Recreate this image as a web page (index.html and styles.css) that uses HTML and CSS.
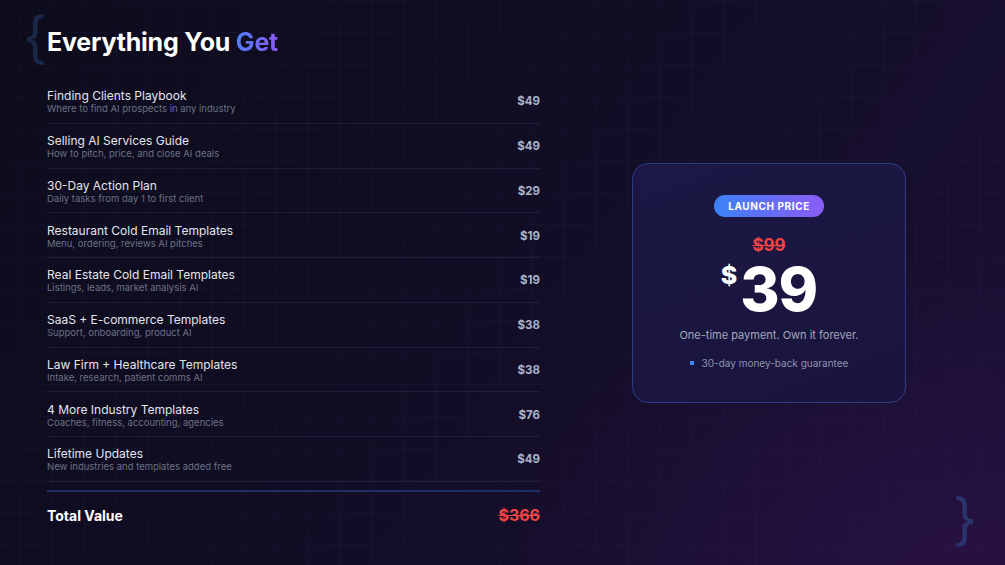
FILE: index.html
```html
<!DOCTYPE html>
<html>
<head>
<meta charset="utf-8">
<link rel="stylesheet" href="styles.css">
</head>
<body>
<div class="page">
  <span class="brace brace-open">{</span>
  <span class="brace brace-close">}</span>
  <section class="left">
    <h1 class="title">Everything You <span class="accent">Get</span></h1>
    <ul class="items">
      <li class="item"><div class="txt"><div class="name">Finding Clients Playbook</div><div class="desc">Where to find AI prospects in any industry</div></div><div class="price">$49</div></li>
      <li class="item"><div class="txt"><div class="name">Selling AI Services Guide</div><div class="desc">How to pitch, price, and close AI deals</div></div><div class="price">$49</div></li>
      <li class="item"><div class="txt"><div class="name">30-Day Action Plan</div><div class="desc">Daily tasks from day 1 to first client</div></div><div class="price">$29</div></li>
      <li class="item"><div class="txt"><div class="name">Restaurant Cold Email Templates</div><div class="desc">Menu, ordering, reviews AI pitches</div></div><div class="price">$19</div></li>
      <li class="item"><div class="txt"><div class="name">Real Estate Cold Email Templates</div><div class="desc">Listings, leads, market analysis AI</div></div><div class="price">$19</div></li>
      <li class="item"><div class="txt"><div class="name">SaaS + E-commerce Templates</div><div class="desc">Support, onboarding, product AI</div></div><div class="price">$38</div></li>
      <li class="item"><div class="txt"><div class="name">Law Firm + Healthcare Templates</div><div class="desc">Intake, research, patient comms AI</div></div><div class="price">$38</div></li>
      <li class="item"><div class="txt"><div class="name">4 More Industry Templates</div><div class="desc">Coaches, fitness, accounting, agencies</div></div><div class="price">$76</div></li>
      <li class="item"><div class="txt"><div class="name">Lifetime Updates</div><div class="desc">New industries and templates added free</div></div><div class="price">$49</div></li>
    </ul>
    <div class="total">
      <span class="total-label">Total Value</span>
      <span class="total-price">$366</span>
    </div>
  </section>
  <section class="right">
    <div class="card">
      <span class="badge">LAUNCH PRICE</span>
      <div class="old">$99</div>
      <div class="now"><span class="cur">$</span><span class="amt">39</span></div>
      <p class="note">One-time payment. Own it forever.</p>
      <p class="guarantee"><span class="dot"></span>30-day money-back guarantee</p>
    </div>
  </section>
</div>
</body>
</html>
```
FILE: styles.css
```css
* { box-sizing: border-box; }
html, body { margin: 0; padding: 0; }
body {
  width: 1005px;
  height: 565px;
  overflow: hidden;
  font-family: "Inter", "Noto Sans", sans-serif;
  color: #e4e6ee;
  background-color: #110d22;
}
.page {
  position: relative;
  width: 1005px;
  height: 565px;
  display: flex;
  align-items: flex-start;
  padding: 0 0 0 47px;
  background-image:
    linear-gradient(rgba(120,120,200,0.045) 1px, transparent 1px),
    linear-gradient(90deg, rgba(120,120,200,0.045) 1px, transparent 1px),
    radial-gradient(ellipse 560px 380px at 95% 100%, rgba(50,18,80,0.5), transparent 80%),
    linear-gradient(125deg, #0d0c1c 0%, #110d24 45%, #180f30 80%, #1c1035 100%);
  background-size: 32px 32px, 32px 32px, 100% 100%, 100% 100%;
  background-position: 20px 0, 20px 0, 0 0, 0 0;
}
.brace {
  position: absolute;
  font-family: "Inter", sans-serif;
  font-weight: 400;
  line-height: 1;
  width: 18px;
  overflow: visible;
}
.brace-open {
  left: 23px;
  top: 9px;
  font-size: 56px;
  color: #1b2746;
}
.brace-close {
  left: 953px;
  top: 491px;
  font-size: 56px;
  color: #2a336c;
}
.left {
  width: 493px;
  position: relative;
}
.title {
  margin: 28px 0 0;
  font-size: 25px;
  line-height: 28px;
  font-weight: 700;
  letter-spacing: -0.2px;
  color: #ffffff;
}
.accent {
  background: linear-gradient(90deg, #4f7dfb, #8b5cf6);
  -webkit-background-clip: text;
  background-clip: text;
  color: transparent;
}
.items {
  list-style: none;
  margin: 23px 0 0;
  padding: 0;
}
.item {
  display: flex;
  justify-content: space-between;
  align-items: center;
  height: 44.75px;
  padding: 1px 0 0;
  border-bottom: 1px solid rgba(60,58,100,0.35);
}
.name {
  font-size: 12px;
  line-height: 15px;
  padding-top: 1px;
  color: #e3e5ec;
}
.desc {
  font-size: 9.5px;
  line-height: 12px;
  color: #6b7287;
}
.price {
  font-size: 11.5px;
  font-weight: 700;
  color: #a9b2c6;
}
.total {
  margin-top: 8px;
  border-top: 2px solid #1f2f66;
  display: flex;
  justify-content: space-between;
  align-items: center;
  height: 48px;
  padding-top: 1px;
}
.total-label {
  font-size: 14px;
  font-weight: 700;
  color: #ffffff;
}
.total-price {
  font-size: 16px;
  font-weight: 700;
  color: #ef4444;
  text-decoration: line-through;
}
.right {
  margin-left: 92px;
  height: 565px;
  display: flex;
  align-items: center;
}
.card {
  width: 274px;
  height: 240px;
  border: 1.5px solid #2c3d85;
  border-radius: 16px;
  background: linear-gradient(160deg, #1b1845 0%, #1a1640 60%, #1c133d 100%);
  display: flex;
  flex-direction: column;
  align-items: center;
  padding-top: 31px;
}
.badge {
  display: inline-block;
  height: 22px;
  line-height: 22px;
  padding: 0 14px;
  border-radius: 11px;
  background: linear-gradient(90deg, #3b82f6, #8b5cf6);
  color: #ffffff;
  font-size: 10px;
  font-weight: 700;
  letter-spacing: 0.6px;
}
.old {
  margin-top: 19px;
  font-size: 17px;
  line-height: 18px;
  font-weight: 700;
  color: #ef4444;
  text-decoration: line-through;
}
.now {
  display: flex;
  align-items: flex-start;
  margin-top: 10px;
  height: 56px;
  color: #ffffff;
  font-weight: 800;
}
.cur {
  font-size: 25px;
  line-height: 22px;
  margin-right: 3px;
}
.amt {
  font-size: 60px;
  line-height: 50px;
  letter-spacing: -1px;
}
.note {
  margin: 7px 0 0;
  font-size: 11px;
  line-height: 16px;
  color: #a1a8bd;
}
.guarantee {
  margin: 13px 0 0;
  font-size: 10px;
  line-height: 14px;
  color: #8d94ad;
  display: flex;
  align-items: center;
}
.dot {
  width: 4px;
  height: 4px;
  background: #3b82f6;
  margin-right: 8px;
}
```
